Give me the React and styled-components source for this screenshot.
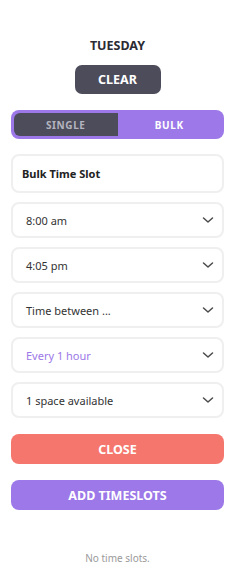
import React from "react";
import styled, { createGlobalStyle } from "styled-components";

const GlobalStyle = createGlobalStyle`
    body {
        margin: 0;
        background: #fff;
        font-family: "Noto Sans", "Open Sans", sans-serif;
    }
`;

const Panel = styled.div`
    width: 235px;
    box-sizing: border-box;
    padding: 37px 11px 0 11px;
    display: flex;
    flex-direction: column;
    align-items: stretch;
`;

const Day = styled.h2`
    margin: 0;
    text-align: center;
    font-size: 12.5px;
    font-weight: 700;
    color: #2b2b33;
    line-height: 18px;
`;

const ClearButton = styled.button`
    align-self: center;
    margin-top: 10px;
    width: 86px;
    height: 29px;
    border: none;
    border-radius: 7px;
    background: #4c4c5b;
    color: #fff;
    font-family: inherit;
    font-weight: 700;
    font-size: 12.5px;
`;

const Toggle = styled.div`
    margin-top: 16px;
    height: 29px;
    box-sizing: border-box;
    padding: 3px;
    border-radius: 8px;
    background: #9c78e8;
    display: flex;
`;

const ToggleOption = styled.div`
    flex: 1;
    display: flex;
    align-items: center;
    justify-content: center;
    font-size: 10px;
    font-weight: 700;
    letter-spacing: 0.6px;
    border-radius: 6px 0 0 6px;
    color: ${(p) => (p.$active ? "#fff" : "#b4b4bf")};
    background: ${(p) => (p.$active ? "transparent" : "#4c4c5b")};
`;

const Fields = styled.div`
    margin-top: 15px;
    display: flex;
    flex-direction: column;
    gap: 9px;
`;

const Field = styled.div`
    height: ${(p) => (p.$tall ? "39px" : "36px")};
    box-sizing: border-box;
    border: 2px solid #efefef;
    border-radius: 8px;
    padding: 0 8px 0 ${(p) => (p.$tall ? "9px" : "13px")};
    display: flex;
    align-items: center;
    justify-content: space-between;
    font-size: 11px;
    color: ${(p) => p.$color || "#333"};
    font-weight: ${(p) => (p.$bold ? 700 : 400)};
`;

const Chevron = () => (
    <svg width="12" height="12" viewBox="0 0 12 12">
        <path d="M1.5 4 L6 8 L10.5 4" fill="none" stroke="#4a4a4a" strokeWidth="1.5" strokeLinecap="round" strokeLinejoin="round" />
    </svg>
);

const ActionButton = styled.button`
    height: 30px;
    border: none;
    border-radius: 8px;
    background: ${(p) => p.$bg};
    color: #fff;
    font-family: inherit;
    font-size: 12.5px;
    font-weight: 700;
    margin-top: ${(p) => p.$top};
`;

const Empty = styled.p`
    margin: 41px 0 0 0;
    text-align: center;
    font-size: 10px;
    color: #9a9a9a;
`;

const selects = [
    { label: "8:00 am" },
    { label: "4:05 pm" },
    { label: "Time between ..." },
    { label: "Every 1 hour", color: "#9c78e8" },
    { label: "1 space available" },
];

export default function App() {
    return (
        <>
            <GlobalStyle />
            <Panel>
                <Day>TUESDAY</Day>
                <ClearButton>CLEAR</ClearButton>
                <Toggle>
                    <ToggleOption>SINGLE</ToggleOption>
                    <ToggleOption $active>BULK</ToggleOption>
                </Toggle>
                <Fields>
                    <Field $tall $bold $color="#222">Bulk Time Slot</Field>
                    {selects.map((s) => (
                        <Field key={s.label} $color={s.color}>
                            {s.label}
                            <Chevron />
                        </Field>
                    ))}
                </Fields>
                <ActionButton $bg="#f5766c" $top="16px">CLOSE</ActionButton>
                <ActionButton $bg="#9c78e8" $top="16px">ADD TIMESLOTS</ActionButton>
                <Empty>No time slots.</Empty>
            </Panel>
        </>
    );
}
